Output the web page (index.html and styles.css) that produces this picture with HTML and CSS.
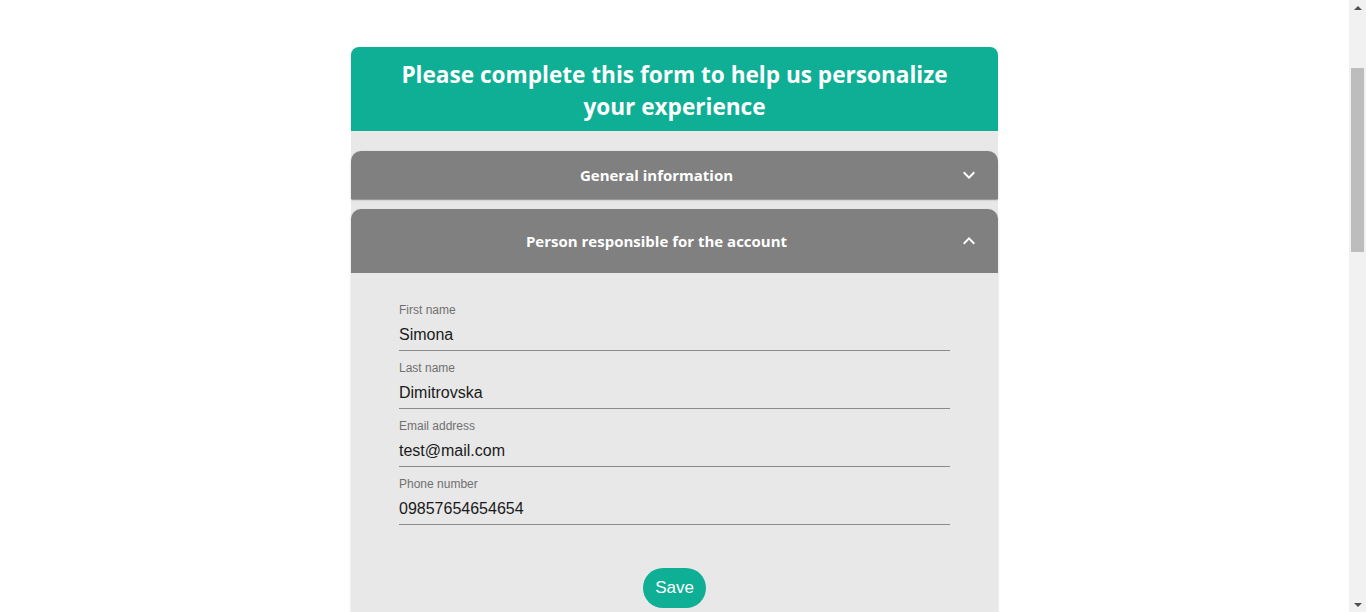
FILE: index.html
```html
<!DOCTYPE html>
<html lang="en">
<head>
<meta charset="utf-8">
<title>Personalize your experience</title>
<link rel="stylesheet" href="styles.css">
</head>
<body>
<div class="app">
  <div class="page">
    <main class="card">
      <header class="card-header">
        <h1 class="card-title">Please complete this form to help us personalize your experience</h1>
      </header>
      <div class="card-body">
        <section class="accordion">
          <div class="summary">
            <span class="summary-title">General information</span>
            <svg class="chevron" viewBox="0 0 24 24" width="24" height="24"><path d="M16.59 8.59L12 13.17 7.41 8.59 6 10l6 6 6-6z"/></svg>
          </div>
        </section>
        <section class="accordion expanded">
          <div class="summary summary-open">
            <span class="summary-title">Person responsible for the account</span>
            <svg class="chevron" viewBox="0 0 24 24" width="24" height="24"><path d="M12 8l-6 6 1.41 1.41L12 10.83l4.59 4.58L18 14z"/></svg>
          </div>
          <form class="details">
            <label class="field">
              <span class="field-label">First name</span>
              <span class="field-value">Simona</span>
            </label>
            <label class="field">
              <span class="field-label">Last name</span>
              <span class="field-value">Dimitrovska</span>
            </label>
            <label class="field">
              <span class="field-label">Email address</span>
              <span class="field-value">test@mail.com</span>
            </label>
            <label class="field">
              <span class="field-label">Phone number</span>
              <span class="field-value">09857654654654</span>
            </label>
            <div class="actions">
              <button type="button" class="save-btn">Save</button>
            </div>
          </form>
        </section>
      </div>
    </main>
  </div>
  <div class="scrollbar" aria-hidden="true">
    <span class="sb-arrow sb-up"></span>
    <div class="sb-track">
      <div class="sb-thumb"></div>
    </div>
    <span class="sb-arrow sb-down"></span>
  </div>
</div>
</body>
</html>
```

FILE: styles.css
```css
html, body {
  margin: 0;
  height: 100%;
}
body {
  background: #ffffff;
  font-family: "Liberation Sans", Arial, sans-serif;
  overflow: hidden;
}
.app {
  display: flex;
  height: 100vh;
}
.page {
  flex: 1;
  overflow: hidden;
}
.card {
  width: 647px;
  margin: 47px auto 0;
}
.card-header {
  background: #0faf96;
  border-radius: 8px 8px 0 0;
  padding: 12px 44px 8px;
}
.card-title {
  margin: 0;
  color: #ffffff;
  font-family: "Open Sans", "Noto Sans", sans-serif;
  font-weight: 700;
  font-size: 22.6px;
  line-height: 32px;
  text-align: center;
}
.card-body {
  background: #e8e8e8;
  padding: 20px 0 0;
  display: flex;
  flex-direction: column;
  gap: 10px;
}
.accordion {
  background: #808080;
  border-radius: 10px 10px 0 0;
  box-shadow: 0 2px 1px -1px rgba(0,0,0,0.2), 0 1px 1px 0 rgba(0,0,0,0.14), 0 1px 3px 0 rgba(0,0,0,0.12);
}
.summary {
  height: 48px;
  display: flex;
  align-items: center;
  padding: 0 17px 0 16px;
}
.summary-open {
  height: 64px;
}
.summary-title {
  flex: 1;
  text-align: center;
  color: #ffffff;
  font-family: "Open Sans", "Noto Sans", sans-serif;
  font-weight: 700;
  font-size: 15px;
}
.chevron {
  margin-left: 11px;
  fill: #ffffff;
  flex: none;
}
.details {
  background: #e8e8e8;
  padding: 30px 48px 60px;
  display: flex;
  flex-direction: column;
}
.field {
  display: flex;
  flex-direction: column;
  border-bottom: 1px solid #8a8a8a;
  padding-bottom: 6px;
  margin-bottom: 10px;
}
.field-label {
  font-size: 12px;
  line-height: 14px;
  color: #707070;
  margin-bottom: 8px;
}
.field-value {
  font-size: 16px;
  line-height: 19px;
  color: #1a1a1a;
}
.actions {
  display: flex;
  justify-content: center;
  padding-top: 33px;
}
.save-btn {
  height: 40px;
  padding: 0 12px;
  border: none;
  border-radius: 20px;
  background: #0faf96;
  color: #ffffff;
  font-family: "Liberation Sans", Arial, sans-serif;
  font-size: 17px;
}
.scrollbar {
  width: 17px;
  flex: none;
  background: #f1f1f1;
  display: flex;
  flex-direction: column;
  align-items: center;
}
.sb-arrow {
  width: 0;
  height: 0;
  border-left: 4px solid transparent;
  border-right: 4px solid transparent;
  margin: 5px 0;
}
.sb-up {
  border-bottom: 4px solid #505050;
  margin-top: 6px;
}
.sb-down {
  border-top: 4px solid #505050;
  margin-bottom: 5px;
}
.sb-track {
  flex: 1;
  width: 100%;
  display: flex;
  justify-content: center;
  padding-top: 53px;
}
.sb-thumb {
  width: 13px;
  height: 184px;
  background: #bdbdbd;
}
```
